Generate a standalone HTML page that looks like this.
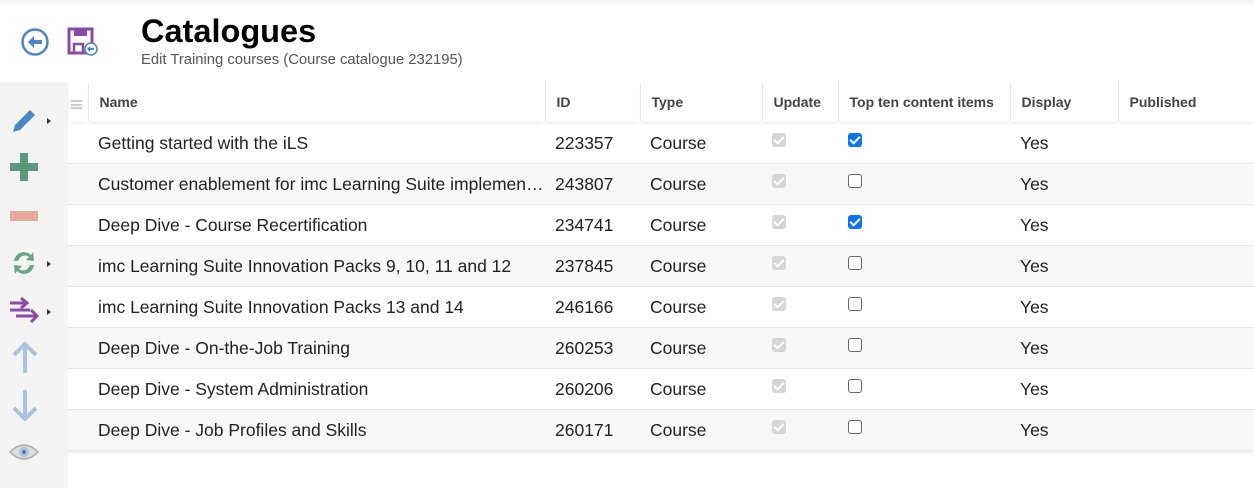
<!DOCTYPE html>
<html><head><style>
*{margin:0;padding:0;box-sizing:border-box}
body{width:1254px;height:488px;background:#fff;font-family:"Liberation Sans",sans-serif;position:relative;overflow:hidden}
.top{position:absolute;left:0;top:0;width:1254px;height:6px;background:linear-gradient(#f0f0f0,#fff)}
h1{position:absolute;left:141px;top:13px;font-size:32.5px;font-weight:bold;color:#000}
.sub{position:absolute;left:141px;top:52px;font-size:14.8px;color:#555}
.side{position:absolute;left:0;top:82px;width:68px;height:406px;background:#f4f4f4}
.ic{position:absolute}
.tri{position:absolute;width:0;height:0;border-top:3px solid transparent;border-bottom:3px solid transparent;border-left:4px solid #333}
table{position:absolute;left:68px;top:82px;border-collapse:collapse;width:1186px;table-layout:fixed}
th{height:40px;text-align:left;font-size:14px;font-weight:bold;color:#444;padding-left:11px;border-left:1px solid #e6e6e6;box-shadow:0 3px 3px -2px rgba(0,0,0,.12)}
th:first-child{border-left:none}
td{height:41px;font-size:17.5px;color:#222;padding-left:10px;padding-top:2px;border-bottom:1px solid #e4e4e4;white-space:nowrap;overflow:hidden;text-overflow:ellipsis}
tr.g td{background:#f8f8f8}
.cb{display:inline-block;width:14px;height:14px;border-radius:3px;vertical-align:2px}
.dis{background:#d6d6d6;position:relative}
.dis::after,.on::after{content:"";position:absolute;left:4px;top:1px;width:4px;height:8px;border:solid #fff;border-width:0 2px 2px 0;transform:rotate(45deg)}
.on{background:#0b75f0;position:relative}
.off{border:1.5px solid #666;background:#fff}
</style></head><body>
<div class="top"></div>
<svg class="ic" style="left:20px;top:27px" width="30" height="30" viewBox="0 0 30 30"><circle cx="15" cy="15" r="12.5" fill="none" stroke="#4a86c5" stroke-width="2.5"/><path d="M8 15 L14 9 V13 H22 V17 H14 V21 Z" fill="#4a86c5"/></svg>
<svg class="ic" style="left:67px;top:27px" width="32" height="30" viewBox="0 0 32 30"><path d="M2 2 H25 V26 H2 Z" fill="none" stroke="#8a4aa8" stroke-width="3"/><rect x="7" y="2" width="13" height="7" fill="#8a4aa8"/><rect x="7" y="17" width="9" height="9" fill="none" stroke="#8a4aa8" stroke-width="2.5"/><circle cx="24" cy="22" r="6" fill="#fff" stroke="#4a86c5" stroke-width="1.5"/><path d="M20 22 L23 19 V21 H27 V23 H23 V25 Z" fill="#4a86c5"/></svg>
<h1>Catalogues</h1>
<div class="sub">Edit Training courses (Course catalogue 232195)</div>
<div class="side"></div>
<svg class="ic" style="left:10px;top:107px" width="28" height="28" viewBox="0 0 28 28"><path d="M3 25 L5 18 L20 3 L25 8 L10 23 Z" fill="#4a86c5"/></svg>
<div class="tri" style="left:47px;top:118px"></div>
<svg class="ic" style="left:10px;top:153px" width="28" height="28"><path d="M10 0H18V10H28V18H18V28H10V18H0V10H10Z" fill="#5c9a7e"/></svg>
<div class="ic" style="left:10px;top:211px;width:28px;height:10px;background:#e8a898"></div>
<svg class="ic" style="left:10px;top:249px" width="28" height="28" viewBox="0 0 28 28"><path d="M4 12 A10 10 0 0 1 21 6 L23 3 L24 12 L16 11 L19 8 A7 7 0 0 0 8 12Z M24 16 A10 10 0 0 1 7 22 L5 25 L4 16 L12 17 L9 20 A7 7 0 0 0 20 16Z" fill="#6ba488"/></svg>
<div class="tri" style="left:47px;top:261px"></div>
<svg class="ic" style="left:8px;top:297px" width="32" height="28" viewBox="0 0 32 28"><path d="M2 6H18M13 1L19 6L13 11M2 13H22M8 19H28M23 13L29 19L23 25" fill="none" stroke="#8a4aa8" stroke-width="3"/></svg>
<div class="tri" style="left:47px;top:309px"></div>
<svg class="ic" style="left:12px;top:342px" width="26" height="32" viewBox="0 0 26 32"><path d="M13 2V31M2 13L13 2L24 13" fill="none" stroke="#a9c3e0" stroke-width="4"/></svg>
<svg class="ic" style="left:12px;top:389px" width="26" height="32" viewBox="0 0 26 32"><path d="M13 1V30M2 19L13 30L24 19" fill="none" stroke="#a9c3e0" stroke-width="4"/></svg>
<svg class="ic" style="left:9px;top:443px" width="30" height="18" viewBox="0 0 30 18"><path d="M1 9 Q15 -5 29 9 Q15 23 1 9Z" fill="#ddd" stroke="#aaa" stroke-width="1.5"/><circle cx="15" cy="9" r="5" fill="#a9c3e0"/><circle cx="15" cy="9" r="2" fill="#5a7aa0"/></svg>
<table>
<colgroup><col style="width:20px"><col style="width:457px"><col style="width:95px"><col style="width:122px"><col style="width:76px"><col style="width:172px"><col style="width:108px"><col></colgroup>
<tr><th style="padding-left:3px"><span style="display:inline-block;width:11px;height:9px;border-top:2px solid #ccc;border-bottom:2px solid #ccc;position:relative;top:2px"><span style="display:block;height:2px;background:#ccc;margin-top:1.5px"></span></span></th><th>Name</th><th>ID</th><th>Type</th><th>Update</th><th>Top ten content items</th><th>Display</th><th>Published</th></tr>
<tr><td></td><td>Getting started with the iLS</td><td>223357</td><td>Course</td><td><span class="cb dis"></span></td><td><span class="cb on"></span></td><td>Yes</td><td></td></tr>
<tr class="g"><td></td><td>Customer enablement for imc Learning Suite implementation</td><td>243807</td><td>Course</td><td><span class="cb dis"></span></td><td><span class="cb off"></span></td><td>Yes</td><td></td></tr>
<tr><td></td><td>Deep Dive - Course Recertification</td><td>234741</td><td>Course</td><td><span class="cb dis"></span></td><td><span class="cb on"></span></td><td>Yes</td><td></td></tr>
<tr class="g"><td></td><td>imc Learning Suite Innovation Packs 9, 10, 11 and 12</td><td>237845</td><td>Course</td><td><span class="cb dis"></span></td><td><span class="cb off"></span></td><td>Yes</td><td></td></tr>
<tr><td></td><td>imc Learning Suite Innovation Packs 13 and 14</td><td>246166</td><td>Course</td><td><span class="cb dis"></span></td><td><span class="cb off"></span></td><td>Yes</td><td></td></tr>
<tr class="g"><td></td><td>Deep Dive - On-the-Job Training</td><td>260253</td><td>Course</td><td><span class="cb dis"></span></td><td><span class="cb off"></span></td><td>Yes</td><td></td></tr>
<tr><td></td><td>Deep Dive - System Administration</td><td>260206</td><td>Course</td><td><span class="cb dis"></span></td><td><span class="cb off"></span></td><td>Yes</td><td></td></tr>
<tr class="g"><td></td><td>Deep Dive - Job Profiles and Skills</td><td>260171</td><td>Course</td><td><span class="cb dis"></span></td><td><span class="cb off"></span></td><td>Yes</td><td></td></tr>
</table>
<div style="position:absolute;left:68px;top:450px;width:1186px;height:5px;background:linear-gradient(#e8e8e8,#fff)"></div>
</body></html>
